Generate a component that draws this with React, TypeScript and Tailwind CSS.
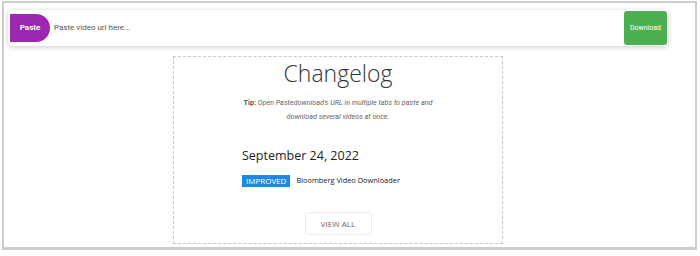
export default function App() {
  return (
    <div className="w-[700px] h-[256px] bg-white pt-[1px] pl-[2px]">
      <div className="w-[695px] h-[249px] border-2 border-[#cdcdcd] border-b-[3px] bg-white pl-[4px] pt-[7px]">
        <div className="w-[660px]">
          {/* url bar */}
          <div className="h-[36px] flex items-center rounded-[4px] bg-white shadow-[0_1px_5px_rgba(0,0,0,0.22)] pl-[2px] pr-[1px]">
            <button className="h-[28px] w-[40px] rounded-l-[6px] rounded-r-full bg-[#9c27b0] text-white text-[8px] font-bold font-['Roboto',sans-serif]">
              Paste
            </button>
            <span className="ml-[4px] flex-1 text-[8px] text-[#555] font-['Roboto',sans-serif]">
              Paste video url here...
            </span>
            <button className="h-[34px] w-[43px] rounded-[3px] bg-[#4caf50] text-white text-[7px] font-['Roboto',sans-serif]">
              Download
            </button>
          </div>

          {/* changelog */}
          <div className="mx-auto mt-[10px] w-[330px] h-[188px] border border-dashed border-[#c8c8c8] flex flex-col">
            <h1 className="text-center text-[23px] leading-[30px] mt-[1px] font-light text-[#333] font-['Open_Sans',sans-serif]">
              Changelog
            </h1>
            <p className="mx-auto mt-[8px] w-[200px] text-center text-[7.2px] leading-[14px] italic text-[#666] font-['Roboto',sans-serif]">
              <span className="not-italic font-bold text-[#555]">Tip:</span> Open Pastedownload's URL in multiple tabs to paste and download several videos at once.
            </p>
            <div className="ml-[68px] mt-[23px]">
              <div className="text-[12.5px] leading-[18px] text-[#222] font-['Open_Sans',sans-serif]">
                September 24, 2022
              </div>
              <div className="mt-[10px] flex items-center gap-[6px]">
                <span className="h-[12px] px-[4px] flex items-center bg-[#1e88e5] text-white text-[8px] font-['Open_Sans',sans-serif]">
                  IMPROVED
                </span>
                <span className="text-[7.4px] text-[#222] font-['Open_Sans',sans-serif]">
                  Bloomberg Video Downloader
                </span>
              </div>
            </div>
            <button className="mx-auto mt-[25px] w-[67px] h-[23px] rounded-[3px] border border-[#ececec] text-[8px] text-[#666] font-['Open_Sans',sans-serif]">
              VIEW ALL
            </button>
          </div>
        </div>
      </div>
    </div>
  )
}
